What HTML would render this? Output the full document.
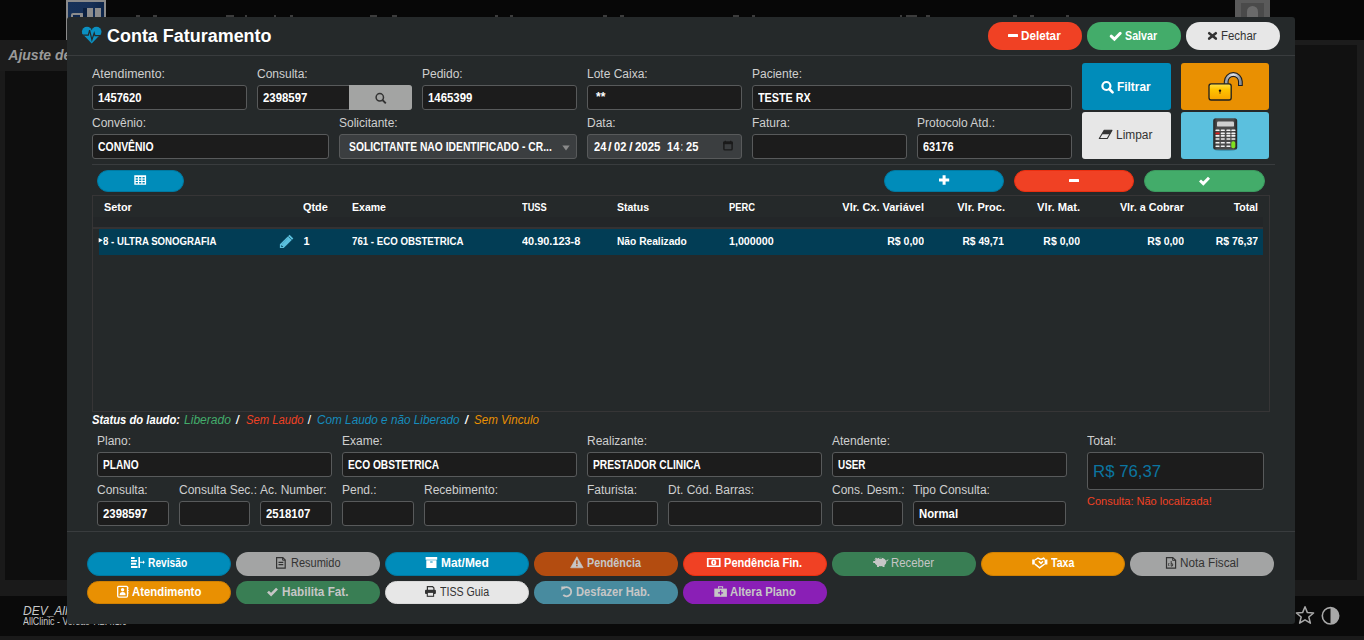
<!DOCTYPE html>
<html><head><meta charset="utf-8"><style>
*{margin:0;padding:0;box-sizing:border-box}
html,body{width:1364px;height:640px;overflow:hidden;background:#0e0e0e;font-family:"Liberation Sans",sans-serif}
.a{position:absolute}
.t{white-space:nowrap}
.inp{background:#1c1c1c;border:1px solid #585a5b;border-radius:3px}
</style></head><body>
<div class="a " style="left:0px;top:0px;width:1364px;height:40px;background:#070707"></div>
<div class="a " style="left:0px;top:40px;width:1364px;height:31px;background:#1c1c1c"></div>
<div class="a " style="left:0px;top:71px;width:5px;height:509px;background:#1a1a1a"></div>
<div class="a " style="left:5px;top:71px;width:62px;height:509px;background:#0e0e0e"></div>
<div class="a " style="left:1295px;top:45px;width:62px;height:535px;background:#111111"></div>
<div class="a " style="left:1357px;top:40px;width:7px;height:540px;background:#1c1c1c"></div>
<div class="a " style="left:0px;top:580px;width:1364px;height:16px;background:#1a1a1a"></div>
<div class="a " style="left:0px;top:596px;width:1364px;height:40px;background:#0a0a0a"></div>
<div class="a " style="left:0px;top:636px;width:1364px;height:4px;background:#1a1a1a"></div>
<div class="a " style="left:66px;top:0px;width:40px;height:40px;background:#8a8a8a"></div>
<div class="a " style="left:67.6px;top:1.5px;width:36.8px;height:38.5px;background:linear-gradient(90deg,#173259 0%,#163058 60%,#0c2448 100%)"></div>
<div class="a " style="left:70.5px;top:12.6px;width:14.3px;height:4.4px;background:#8c8c8c;border-radius:2px 3px 0 0"></div>
<div class="a " style="left:73px;top:15.4px;width:7px;height:1.6px;background:#10284e"></div>
<div class="a " style="left:83px;top:7.8px;width:4px;height:9.2px;background:#0b2040"></div>
<div class="a " style="left:87px;top:7.8px;width:6.2px;height:9.2px;background:#8c8c8c"></div>
<div class="a " style="left:95.1px;top:7.8px;width:6.1px;height:9.2px;background:#8c8c8c"></div>
<div class="a " style="left:136px;top:15px;width:4px;height:2px;background:#3c3c3c"></div>
<div class="a " style="left:153px;top:15px;width:4px;height:2px;background:#3c3c3c"></div>
<div class="a " style="left:226px;top:15px;width:8px;height:2px;background:#3c3c3c"></div>
<div class="a " style="left:245px;top:15px;width:2px;height:2px;background:#3c3c3c"></div>
<div class="a " style="left:274px;top:15px;width:2px;height:2px;background:#3c3c3c"></div>
<div class="a " style="left:290px;top:15px;width:3px;height:2px;background:#3c3c3c"></div>
<div class="a " style="left:370px;top:15px;width:7px;height:2px;background:#3c3c3c"></div>
<div class="a " style="left:392px;top:15px;width:5px;height:2px;background:#3c3c3c"></div>
<div class="a " style="left:495px;top:15px;width:3px;height:2px;background:#3c3c3c"></div>
<div class="a " style="left:510px;top:15px;width:3px;height:2px;background:#3c3c3c"></div>
<div class="a " style="left:603px;top:15px;width:4px;height:2px;background:#3c3c3c"></div>
<div class="a " style="left:620px;top:15px;width:4px;height:2px;background:#3c3c3c"></div>
<div class="a " style="left:733px;top:15px;width:6px;height:2px;background:#3c3c3c"></div>
<div class="a " style="left:752px;top:15px;width:3px;height:2px;background:#3c3c3c"></div>
<div class="a " style="left:900px;top:15px;width:2px;height:2px;background:#3c3c3c"></div>
<div class="a " style="left:906px;top:15px;width:11px;height:2px;background:#3c3c3c"></div>
<div class="a " style="left:926px;top:15px;width:4px;height:2px;background:#3c3c3c"></div>
<div class="a " style="left:1013px;top:15px;width:4px;height:2px;background:#3c3c3c"></div>
<div class="a " style="left:1030px;top:15px;width:4px;height:2px;background:#3c3c3c"></div>
<div class="a " style="left:1066px;top:15px;width:3px;height:2px;background:#3c3c3c"></div>
<div class="a " style="left:1235px;top:0px;width:35px;height:17px;background:#5a5a5a"></div>
<div class="a " style="left:1241px;top:3px;width:23px;height:14px;background:#4a4a4a"></div>
<div class="a " style="left:1247px;top:6px;width:11px;height:11px;background:#6a6a6a;border-radius:50% 50% 0 0"></div>
<div class="a t" style="top:48.15px;font-size:14px;line-height:14px;color:#9a9a9a;font-weight:bold;font-style:italic;left:8.30px;">Ajuste de Contas</div>
<div class="a t" style="top:604.84px;font-size:12px;line-height:12px;color:#c8c8c8;font-style:italic;left:23.00px;">DEV_AllClinic</div>
<div class="a t" style="top:617.04px;font-size:10px;line-height:10px;color:#c8c8c8;transform:scaleX(0.8866);transform-origin:left center;left:23.00px;">AllClinic - Versão 7.2.4.1.0</div>
<svg class="a" style="left:1295px;top:605px;" width="20" height="20" viewBox="1295 605 20 20"><polygon points="1305,606.8 1307.4,612.6 1313.6,613 1308.8,617 1310.4,623.2 1305,619.8 1299.6,623.2 1301.2,617 1296.4,613 1302.6,612.6" fill="none" stroke="#a8a8a8" stroke-width="1.5" stroke-linejoin="round"/></svg>
<svg class="a" style="left:1320px;top:605px;" width="21" height="21" viewBox="1320 605 21 21"><circle cx="1330.5" cy="615.8" r="8.2" fill="#0a0a0a" stroke="#a8a8a8" stroke-width="1.6"/><path d="M1330.5 607.6 A8.2 8.2 0 0 1 1330.5 624 Z" fill="#a8a8a8"/></svg>
<div class="a " style="left:67px;top:17px;width:1228px;height:607px;background:#25292a;border-radius:3px"></div>
<div class="a " style="left:67px;top:55px;width:1228px;height:1px;background:#393c3e"></div>
<div class="a " style="left:92px;top:164px;width:1183px;height:1px;background:#393c3e"></div>
<div class="a " style="left:67px;top:531px;width:1228px;height:1px;background:#393c3e"></div>
<svg class="a" style="left:80px;top:25px;" width="24" height="20" viewBox="80 25 24 20"><circle cx="86.95" cy="31.8" r="5.05" fill="#0b90c2"/><circle cx="96.45" cy="31.8" r="5.05" fill="#0b90c2"/><polygon points="82.3,33.8 91.7,43.5 101.1,33.8 96.5,30 91.7,30.6 86.9,30" fill="#0b90c2"/><polyline points="80,35.2 88.3,35.2 89.6,30.2 91.9,39.9 94.2,33 95,35.6 104,35.6" fill="none" stroke="#25292a" stroke-width="1.2" stroke-linejoin="miter"/></svg>
<div class="a t" style="top:26.56px;font-size:18px;line-height:18px;color:#fff;font-weight:bold;transform:scaleX(0.9970);transform-origin:left center;left:107.00px;">Conta Faturamento</div>
<div class="a " style="left:988px;top:22px;width:94px;height:28px;background:#f04124;border-radius:14px"></div>
<div class="a " style="left:1087px;top:22px;width:94px;height:28px;background:#43ac6a;border-radius:14px"></div>
<div class="a " style="left:1186px;top:22px;width:94px;height:28px;background:#e7e7e7;border-radius:14px"></div>
<div class="a " style="left:1008px;top:34px;width:10px;height:3px;background:#fff;border-radius:0.5px"></div>
<div class="a t" style="top:29.94px;font-size:12px;line-height:12px;color:#fff;font-weight:bold;transform:scaleX(0.9754);transform-origin:left center;left:1021.30px;">Deletar</div>
<svg class="a" style="left:1109px;top:31px;" width="14" height="11" viewBox="1109 31 14 11"><polyline points="1111.2,36.2 1114.4,39.2 1120.2,33.3" fill="none" stroke="#fff" stroke-width="3" stroke-linecap="round"/></svg>
<div class="a t" style="top:29.94px;font-size:12px;line-height:12px;color:#fff;font-weight:bold;transform:scaleX(0.8917);transform-origin:left center;left:1124.90px;">Salvar</div>
<svg class="a" style="left:1207px;top:31px;" width="11" height="10" viewBox="1207 31 11 10"><path d="M1209.2 33.2 L1215.8 38.6 M1215.8 33.2 L1209.2 38.6" stroke="#333" stroke-width="2.6" stroke-linecap="round"/></svg>
<div class="a t" style="top:29.94px;font-size:12px;line-height:12px;color:#333;transform:scaleX(0.9517);transform-origin:left center;left:1221.20px;">Fechar</div>
<div class="a t" style="top:67.74px;font-size:12px;line-height:12px;color:#cfcfcf;transform:scaleX(1.0325);transform-origin:left center;left:92.00px;">Atendimento:</div>
<div class="a inp" style="left:92px;top:85px;width:155px;height:25px;"></div>
<div class="a t" style="top:91.84px;font-size:12px;line-height:12px;color:#fff;font-weight:bold;transform:scaleX(0.9315);transform-origin:left center;left:98.30px;">1457620</div>
<div class="a t" style="top:67.74px;font-size:12px;line-height:12px;color:#cfcfcf;left:257.00px;">Consulta:</div>
<div class="a inp" style="left:257px;top:85px;width:155px;height:25px;"></div>
<div class="a t" style="top:91.84px;font-size:12px;line-height:12px;color:#fff;font-weight:bold;transform:scaleX(0.9486);transform-origin:left center;left:263.30px;">2398597</div>
<div class="a " style="left:349px;top:85px;width:63px;height:25px;background:#a3a4a3;border-radius:0 3px 3px 0"></div>
<svg class="a" style="left:374px;top:92px;" width="14" height="13" viewBox="374 92 14 13"><circle cx="379.8" cy="97.3" r="3.7" fill="none" stroke="#333" stroke-width="1.5"/><path d="M382.5 100 L385.8 103.3" stroke="#333" stroke-width="1.9"/></svg>
<div class="a t" style="top:67.74px;font-size:12px;line-height:12px;color:#cfcfcf;left:422.00px;">Pedido:</div>
<div class="a inp" style="left:422px;top:85px;width:155px;height:25px;"></div>
<div class="a t" style="top:91.84px;font-size:12px;line-height:12px;color:#fff;font-weight:bold;transform:scaleX(0.9486);transform-origin:left center;left:428.30px;">1465399</div>
<div class="a t" style="top:67.74px;font-size:12px;line-height:12px;color:#cfcfcf;left:587.00px;">Lote Caixa:</div>
<div class="a inp" style="left:587px;top:85px;width:155px;height:25px;"></div>
<div class="a t" style="top:91.34px;font-size:12px;line-height:12px;color:#fff;font-weight:bold;left:596.00px;">**</div>
<div class="a t" style="top:67.74px;font-size:12px;line-height:12px;color:#cfcfcf;left:752.00px;">Paciente:</div>
<div class="a inp" style="left:752px;top:85px;width:320px;height:25px;"></div>
<div class="a t" style="top:91.84px;font-size:12px;line-height:12px;color:#fff;font-weight:bold;transform:scaleX(0.9000);transform-origin:left center;left:758.30px;">TESTE RX</div>
<div class="a t" style="top:116.74px;font-size:12px;line-height:12px;color:#cfcfcf;left:92.00px;">Convênio:</div>
<div class="a inp" style="left:92px;top:134px;width:237px;height:25px;"></div>
<div class="a t" style="top:140.84px;font-size:12px;line-height:12px;color:#fff;font-weight:bold;transform:scaleX(0.8688);transform-origin:left center;left:98.30px;">CONVÊNIO</div>
<div class="a t" style="top:116.74px;font-size:12px;line-height:12px;color:#cfcfcf;left:339.00px;">Solicitante:</div>
<div class="a inp" style="left:339px;top:134px;width:238px;height:25px;background:#3b3e40;"></div>
<div class="a t" style="top:140.84px;font-size:12px;line-height:12px;color:#fff;font-weight:bold;transform:scaleX(0.8600);transform-origin:left center;left:348.50px;">SOLICITANTE NAO IDENTIFICADO - CR...</div>
<svg class="a" style="left:561px;top:144px;" width="10" height="8" viewBox="561 144 10 8"><polygon points="562.3,145.4 569.7,145.4 566,150.5" fill="#8a8a8a"/></svg>
<div class="a t" style="top:116.74px;font-size:12px;line-height:12px;color:#cfcfcf;left:587.00px;">Data:</div>
<div class="a inp" style="left:587px;top:134px;width:155px;height:25px;background:#3b3e40;"></div>
<div class="a t" style="top:140.84px;font-size:12px;line-height:12px;color:#fff;font-weight:bold;transform:scaleX(0.9179);transform-origin:left center;left:593.90px;">24</div>
<div class="a t" style="top:140.84px;font-size:12px;line-height:12px;color:#fff;font-weight:bold;transform:scaleX(1.0909);transform-origin:left center;left:607.90px;">/</div>
<div class="a t" style="top:140.84px;font-size:12px;line-height:12px;color:#fff;font-weight:bold;transform:scaleX(0.9248);transform-origin:left center;left:613.90px;">02</div>
<div class="a t" style="top:140.84px;font-size:12px;line-height:12px;color:#fff;font-weight:bold;transform:scaleX(1.0909);transform-origin:left center;left:628.70px;">/</div>
<div class="a t" style="top:140.84px;font-size:12px;line-height:12px;color:#fff;font-weight:bold;transform:scaleX(0.9513);transform-origin:left center;left:634.70px;">2025</div>
<div class="a t" style="top:140.84px;font-size:12px;line-height:12px;color:#fff;font-weight:bold;transform:scaleX(0.9179);transform-origin:left center;left:667.00px;">14</div>
<div class="a t" style="top:140.84px;font-size:12px;line-height:12px;color:#fff;font-weight:bold;transform:scaleX(0.4000);transform-origin:left center;left:681.00px;">:</div>
<div class="a t" style="top:140.84px;font-size:12px;line-height:12px;color:#fff;font-weight:bold;transform:scaleX(0.9248);transform-origin:left center;left:685.50px;">25</div>
<svg class="a" style="left:722px;top:140px;" width="12" height="12" viewBox="722 140 12 12"><rect x="723.9" y="142.3" width="8.2" height="7.6" rx="1" fill="none" stroke="#1a1a1a" stroke-width="1.4"/><rect x="723.2" y="141.6" width="9.6" height="2.6" fill="#1a1a1a"/><path d="M725.3 140.8 V142 M730.7 140.8 V142" stroke="#1a1a1a" stroke-width="1.2"/></svg>
<div class="a t" style="top:116.74px;font-size:12px;line-height:12px;color:#cfcfcf;left:752.00px;">Fatura:</div>
<div class="a inp" style="left:752px;top:134px;width:155px;height:25px;"></div>
<div class="a t" style="top:116.74px;font-size:12px;line-height:12px;color:#cfcfcf;left:917.00px;">Protocolo Atd.:</div>
<div class="a inp" style="left:917px;top:134px;width:155px;height:25px;"></div>
<div class="a t" style="top:140.84px;font-size:12px;line-height:12px;color:#fff;font-weight:bold;transform:scaleX(0.9132);transform-origin:left center;left:923.30px;">63176</div>
<div class="a " style="left:1082px;top:63px;width:89px;height:47px;background:#008cba;border-radius:3px"></div>
<div class="a " style="left:1082px;top:112px;width:89px;height:47px;background:#e7e7e7;border-radius:3px"></div>
<div class="a " style="left:1181px;top:63px;width:88px;height:47px;background:#e99002;border-radius:3px"></div>
<div class="a " style="left:1181px;top:112px;width:88px;height:47px;background:#5bc0de;border-radius:3px"></div>
<svg class="a" style="left:1099px;top:79px;" width="16" height="16" viewBox="1099 79 16 16"><circle cx="1106.4" cy="86" r="4" fill="none" stroke="#fff" stroke-width="2.2"/><path d="M1109.3 89 L1112.6 92.3" stroke="#fff" stroke-width="2.6" stroke-linecap="round"/></svg>
<div class="a t" style="top:80.84px;font-size:12px;line-height:12px;color:#fff;font-weight:bold;transform:scaleX(0.9882);transform-origin:left center;left:1116.90px;">Filtrar</div>
<svg class="a" style="left:1098px;top:129px;" width="16" height="11" viewBox="1098 129 16 11"><polygon points="1104.2,130.3 1112,130.3 1107.3,138.5 1099.3,138.5" fill="none" stroke="#333" stroke-width="1.1" stroke-linejoin="round"/><polygon points="1104.2,130.3 1112,130.3 1109.8,134.3 1101.8,134.3" fill="#333"/></svg>
<div class="a t" style="top:128.54px;font-size:12px;line-height:12px;color:#333;transform:scaleX(0.9946);transform-origin:left center;left:1116.40px;">Limpar</div>
<svg class="a" style="left:1206px;top:70px;" width="40" height="33" viewBox="1206 70 40 33"><defs><linearGradient id="ly" x1="0" y1="0" x2="0" y2="1"><stop offset="0" stop-color="#ffe24a"/><stop offset="0.35" stop-color="#ffc400"/><stop offset="1" stop-color="#f7a300"/></linearGradient><linearGradient id="lg" x1="0" y1="0" x2="1" y2="0"><stop offset="0" stop-color="#9aa0a8"/><stop offset="0.5" stop-color="#e8eaee"/><stop offset="1" stop-color="#8a9098"/></linearGradient></defs><path d="M1226.2 84 V81.6 A7.1 7.1 0 0 1 1240.4 81.6 V86" fill="none" stroke="#1e1e1e" stroke-width="4.8"/><path d="M1226.2 84 V81.6 A7.1 7.1 0 0 1 1240.4 81.6 V85.1" fill="none" stroke="url(#lg)" stroke-width="2.6"/><rect x="1209" y="83.8" width="22.2" height="16.2" rx="2.2" fill="url(#ly)" stroke="#1e1e1e" stroke-width="1.3"/><circle cx="1220" cy="90.8" r="1.2" fill="#111"/><rect x="1219.5" y="91" width="1" height="2.8" fill="#6a3a00"/></svg>
<svg class="a" style="left:1210px;top:116px;" width="30" height="37" viewBox="1210 116 30 37"><defs><linearGradient id="cg" x1="0" y1="0" x2="1" y2="0"><stop offset="0" stop-color="#222"/><stop offset="0.15" stop-color="#4a4a4a"/><stop offset="0.85" stop-color="#4a4a4a"/><stop offset="1" stop-color="#222"/></linearGradient></defs><ellipse cx="1225" cy="150.3" rx="10" ry="0.8" fill="#3a8fab" opacity="0.8"/><rect x="1213.2" y="118.2" width="24" height="31.6" rx="2.5" fill="url(#cg)"/><rect x="1217" y="121.6" width="17" height="5" rx="1.2" fill="#cfcfcf"/><rect x="1215.4" y="129.5" width="4.2" height="1.6" rx="0.7" fill="#f0f0f0"/><rect x="1220.7" y="129.5" width="4.2" height="1.6" rx="0.7" fill="#f0f0f0"/><rect x="1226.3000000000002" y="129.5" width="4.2" height="1.6" rx="0.7" fill="#f0f0f0"/><rect x="1231.3000000000002" y="129.5" width="4.2" height="1.6" rx="0.7" fill="#f0f0f0"/><rect x="1215.4" y="132.6" width="4.2" height="1.6" rx="0.7" fill="#e02020"/><rect x="1220.7" y="132.6" width="4.2" height="1.6" rx="0.7" fill="#f0f0f0"/><rect x="1226.3000000000002" y="132.6" width="4.2" height="1.6" rx="0.7" fill="#f0f0f0"/><rect x="1231.3000000000002" y="132.6" width="4.2" height="1.6" rx="0.7" fill="#f0f0f0"/><rect x="1215.4" y="135.1" width="4.2" height="1.6" rx="0.7" fill="#f0f0f0"/><rect x="1220.7" y="135.1" width="4.2" height="1.6" rx="0.7" fill="#f0f0f0"/><rect x="1226.3000000000002" y="135.1" width="4.2" height="1.6" rx="0.7" fill="#f0f0f0"/><rect x="1231.3000000000002" y="135.1" width="4.2" height="1.6" rx="0.7" fill="#f0f0f0"/><rect x="1215.4" y="138.2" width="4.2" height="1.6" rx="0.7" fill="#f0f0f0"/><rect x="1220.7" y="138.2" width="4.2" height="1.6" rx="0.7" fill="#f0f0f0"/><rect x="1226.3000000000002" y="138.2" width="4.2" height="1.6" rx="0.7" fill="#f0f0f0"/><rect x="1231.3000000000002" y="138.2" width="4.2" height="1.6" rx="0.7" fill="#f0f0f0"/><rect x="1215.4" y="142.0" width="4.2" height="1.6" rx="0.7" fill="#f0f0f0"/><rect x="1220.7" y="142.0" width="4.2" height="1.6" rx="0.7" fill="#f0f0f0"/><rect x="1226.3000000000002" y="142.0" width="4.2" height="1.6" rx="0.7" fill="#f0f0f0"/><rect x="1215.4" y="145.45" width="4.2" height="1.6" rx="0.7" fill="#f0f0f0"/><rect x="1220.7" y="145.45" width="4.2" height="1.6" rx="0.7" fill="#f0f0f0"/><rect x="1226.3000000000002" y="145.45" width="4.2" height="1.6" rx="0.7" fill="#f0f0f0"/><rect x="1231.3" y="141.2" width="4" height="7" rx="1.8" fill="#7fe020"/></svg>
<div class="a " style="left:97px;top:170px;width:87px;height:22px;background:#008cba;border-radius:11px;border:1px solid #0079a1"></div>
<div class="a " style="left:884px;top:170px;width:120px;height:22px;background:#008cba;border-radius:11px;border:1px solid #0079a1"></div>
<div class="a " style="left:1014px;top:170px;width:120px;height:22px;background:#f04124;border-radius:11px;border:1px solid #ea2f10"></div>
<div class="a " style="left:1144px;top:170px;width:121px;height:22px;background:#43ac6a;border-radius:11px;border:1px solid #3c9a5f"></div>
<svg class="a" style="left:133px;top:174px;" width="14" height="12" viewBox="133 174 14 12"><path fill="#fff" fill-rule="evenodd" d="M134.3 175.3 h11.8 v9.5 h-11.8 Z M135.7 176.9 h2.2 v1.7 h-2.2 Z M139.1 176.9 h2.2 v1.7 h-2.2 Z M142.5 176.9 h2.2 v1.7 h-2.2 Z M135.7 179.6 h2.2 v1.5 h-2.2 Z M139.1 179.6 h2.2 v1.5 h-2.2 Z M142.5 179.6 h2.2 v1.5 h-2.2 Z M135.7 182.1 h2.2 v1.5 h-2.2 Z M139.1 182.1 h2.2 v1.5 h-2.2 Z M142.5 182.1 h2.2 v1.5 h-2.2 Z"/></svg>
<svg class="a" style="left:938px;top:174px;" width="12" height="12" viewBox="938 174 12 12"><path d="M939 178.5 h10.2 v3 h-10.2 Z M942.6 175.2 h3 v9.6 h-3 Z" fill="#fff"/></svg>
<div class="a " style="left:1069px;top:179px;width:10px;height:3px;background:#fff;border-radius:0.5px"></div>
<svg class="a" style="left:1198px;top:176px;" width="13" height="10" viewBox="1198 176 13 10"><polyline points="1200,180.5 1203.3,183.6 1209,177.8" fill="none" stroke="#fff" stroke-width="2.9"/></svg>
<div class="a " style="left:92px;top:195px;width:1178px;height:217px;border:1px solid #363536"></div>
<div class="a " style="left:93px;top:217px;width:1170px;height:11px;background:#232628"></div>
<div class="a " style="left:93px;top:227px;width:1170px;height:2px;background:#343233"></div>
<div class="a " style="left:99px;top:229px;width:1164px;height:26px;background:#023d55"></div>
<div class="a t" style="top:201.59px;font-size:11px;line-height:11px;color:#fff;font-weight:bold;transform:scaleX(0.9893);transform-origin:left center;left:103.50px;">Setor</div>
<div class="a t" style="top:201.59px;font-size:11px;line-height:11px;color:#fff;font-weight:bold;transform:scaleX(0.9920);transform-origin:left center;left:302.90px;">Qtde</div>
<div class="a t" style="top:201.59px;font-size:11px;line-height:11px;color:#fff;font-weight:bold;transform:scaleX(0.9577);transform-origin:left center;left:351.60px;">Exame</div>
<div class="a t" style="top:201.59px;font-size:11px;line-height:11px;color:#fff;font-weight:bold;transform:scaleX(0.8430);transform-origin:left center;left:522.30px;">TUSS</div>
<div class="a t" style="top:201.59px;font-size:11px;line-height:11px;color:#fff;font-weight:bold;transform:scaleX(0.9524);transform-origin:left center;left:617.20px;">Status</div>
<div class="a t" style="top:201.59px;font-size:11px;line-height:11px;color:#fff;font-weight:bold;transform:scaleX(0.8529);transform-origin:left center;left:728.60px;">PERC</div>
<div class="a t" style="top:201.59px;font-size:11px;line-height:11px;color:#fff;font-weight:bold;transform:scaleX(0.9963);transform-origin:right center;left:324.05px;width:600px;text-align:right;">Vlr. Cx. Variável</div>
<div class="a t" style="top:201.59px;font-size:11px;line-height:11px;color:#fff;font-weight:bold;left:404.99px;width:600px;text-align:right;">Vlr. Proc.</div>
<div class="a t" style="top:201.59px;font-size:11px;line-height:11px;color:#fff;font-weight:bold;transform:scaleX(1.0166);transform-origin:right center;left:479.68px;width:600px;text-align:right;">Vlr. Mat.</div>
<div class="a t" style="top:201.59px;font-size:11px;line-height:11px;color:#fff;font-weight:bold;transform:scaleX(0.9801);transform-origin:right center;left:584.22px;width:600px;text-align:right;">Vlr. a Cobrar</div>
<div class="a t" style="top:201.59px;font-size:11px;line-height:11px;color:#fff;font-weight:bold;transform:scaleX(0.9569);transform-origin:right center;left:657.56px;width:600px;text-align:right;">Total</div>
<svg class="a" style="left:98px;top:237px;" width="6" height="7" viewBox="98 237 6 7"><polygon points="98.7,238 102.9,240.3 98.7,242.6" fill="#fff"/></svg>
<div class="a t" style="top:235.59px;font-size:11px;line-height:11px;color:#fff;font-weight:bold;transform:scaleX(0.8758);transform-origin:left center;left:103.30px;">8 - ULTRA SONOGRAFIA</div>
<svg class="a" style="left:278px;top:233px;" width="18" height="17" viewBox="278 233 18 17"><polygon points="279.9,248 279.9,244.3 289.6,234.8 293.3,238.4 283.7,248" fill="#5bc0de"/><path d="M288.3 236.4 L291.7 239.8" stroke="#023d55" stroke-width="0.7"/><path d="M282 244.2 L288 238.3" stroke="#3a9ab8" stroke-width="0.5"/><polygon points="281.3,244.9 283.3,246.9 281.3,246.9" fill="#023d55"/></svg>
<div class="a t" style="top:235.59px;font-size:11px;line-height:11px;color:#fff;font-weight:bold;left:303.50px;">1</div>
<div class="a t" style="top:235.59px;font-size:11px;line-height:11px;color:#fff;font-weight:bold;transform:scaleX(0.8806);transform-origin:left center;left:351.90px;">761 - ECO OBSTETRICA</div>
<div class="a t" style="top:235.59px;font-size:11px;line-height:11px;color:#fff;font-weight:bold;transform:scaleX(0.9932);transform-origin:left center;left:521.90px;">40.90.123-8</div>
<div class="a t" style="top:235.59px;font-size:11px;line-height:11px;color:#fff;font-weight:bold;transform:scaleX(0.9282);transform-origin:left center;left:617.20px;">Não Realizado</div>
<div class="a t" style="top:235.59px;font-size:11px;line-height:11px;color:#fff;font-weight:bold;transform:scaleX(0.9717);transform-origin:left center;left:728.60px;">1,000000</div>
<div class="a t" style="top:235.59px;font-size:11px;line-height:11px;color:#fff;font-weight:bold;transform:scaleX(0.9558);transform-origin:right center;left:324.02px;width:600px;text-align:right;">R$ 0,00</div>
<div class="a t" style="top:235.59px;font-size:11px;line-height:11px;color:#fff;font-weight:bold;transform:scaleX(0.9305);transform-origin:right center;left:404.44px;width:600px;text-align:right;">R$ 49,71</div>
<div class="a t" style="top:235.59px;font-size:11px;line-height:11px;color:#fff;font-weight:bold;transform:scaleX(0.9506);transform-origin:right center;left:479.72px;width:600px;text-align:right;">R$ 0,00</div>
<div class="a t" style="top:235.59px;font-size:11px;line-height:11px;color:#fff;font-weight:bold;transform:scaleX(0.9506);transform-origin:right center;left:584.22px;width:600px;text-align:right;">R$ 0,00</div>
<div class="a t" style="top:235.59px;font-size:11px;line-height:11px;color:#fff;font-weight:bold;transform:scaleX(0.9462);transform-origin:right center;left:658.04px;width:600px;text-align:right;">R$ 76,37</div>
<div class="a t" style="top:414.04px;font-size:12px;line-height:12px;color:#fff;font-weight:bold;font-style:italic;transform:scaleX(0.9362);transform-origin:left center;left:92.40px;">Status do laudo:</div>
<div class="a t" style="top:414.04px;font-size:12px;line-height:12px;color:#43ac6a;font-style:italic;transform:scaleX(1.0064);transform-origin:left center;left:184.40px;">Liberado</div>
<div class="a t" style="top:414.04px;font-size:12px;line-height:12px;color:#fff;font-weight:bold;font-style:italic;transform:scaleX(0.8571);transform-origin:left center;left:235.93px;">/</div>
<div class="a t" style="top:414.04px;font-size:12px;line-height:12px;color:#f04124;font-style:italic;transform:scaleX(0.9365);transform-origin:left center;left:245.50px;">Sem Laudo</div>
<div class="a t" style="top:414.04px;font-size:12px;line-height:12px;color:#fff;font-weight:bold;font-style:italic;transform:scaleX(0.7143);transform-origin:left center;left:308.36px;">/</div>
<div class="a t" style="top:414.04px;font-size:12px;line-height:12px;color:#168cbc;font-style:italic;transform:scaleX(0.9801);transform-origin:left center;left:317.20px;">Com Laudo e não Liberado</div>
<div class="a t" style="top:414.04px;font-size:12px;line-height:12px;color:#fff;font-weight:bold;font-style:italic;transform:scaleX(0.8980);transform-origin:left center;left:464.75px;">/</div>
<div class="a t" style="top:414.04px;font-size:12px;line-height:12px;color:#e99002;font-style:italic;transform:scaleX(0.9672);transform-origin:left center;left:473.80px;">Sem Vinculo</div>
<div class="a t" style="top:434.74px;font-size:12px;line-height:12px;color:#cfcfcf;left:97.00px;">Plano:</div>
<div class="a inp" style="left:97px;top:452px;width:235px;height:25px;"></div>
<div class="a t" style="top:458.84px;font-size:12px;line-height:12px;color:#fff;font-weight:bold;transform:scaleX(0.8476);transform-origin:left center;left:103.30px;">PLANO</div>
<div class="a t" style="top:434.74px;font-size:12px;line-height:12px;color:#cfcfcf;left:342.00px;">Exame:</div>
<div class="a inp" style="left:342px;top:452px;width:235px;height:25px;"></div>
<div class="a t" style="top:458.84px;font-size:12px;line-height:12px;color:#fff;font-weight:bold;transform:scaleX(0.8490);transform-origin:left center;left:348.30px;">ECO OBSTETRICA</div>
<div class="a t" style="top:434.74px;font-size:12px;line-height:12px;color:#cfcfcf;left:587.00px;">Realizante:</div>
<div class="a inp" style="left:587px;top:452px;width:235px;height:25px;"></div>
<div class="a t" style="top:458.84px;font-size:12px;line-height:12px;color:#fff;font-weight:bold;transform:scaleX(0.8521);transform-origin:left center;left:593.30px;">PRESTADOR CLINICA</div>
<div class="a t" style="top:434.74px;font-size:12px;line-height:12px;color:#cfcfcf;left:832.00px;">Atendente:</div>
<div class="a inp" style="left:832px;top:452px;width:235px;height:25px;"></div>
<div class="a t" style="top:458.84px;font-size:12px;line-height:12px;color:#fff;font-weight:bold;transform:scaleX(0.8228);transform-origin:left center;left:838.30px;">USER</div>
<div class="a t" style="top:434.84px;font-size:12px;line-height:12px;color:#cfcfcf;transform:scaleX(1.0300);transform-origin:left center;left:1087.00px;">Total:</div>
<div class="a inp" style="left:1087px;top:452px;width:177px;height:38px;"></div>
<div class="a t" style="top:463.21px;font-size:17px;line-height:17px;color:#0b75a0;transform:scaleX(0.9884);transform-origin:left center;left:1093.40px;">R$ 76,37</div>
<div class="a t" style="top:495.69px;font-size:11px;line-height:11px;color:#f04124;left:1087.00px;">Consulta: Não localizada!</div>
<div class="a t" style="top:483.74px;font-size:12px;line-height:12px;color:#cfcfcf;left:97.00px;">Consulta:</div>
<div class="a inp" style="left:97px;top:501px;width:72px;height:25px;"></div>
<div class="a t" style="top:507.84px;font-size:12px;line-height:12px;color:#fff;font-weight:bold;transform:scaleX(0.9486);transform-origin:left center;left:103.30px;">2398597</div>
<div class="a t" style="top:483.74px;font-size:12px;line-height:12px;color:#cfcfcf;left:179.00px;">Consulta Sec.:</div>
<div class="a inp" style="left:179px;top:501px;width:71px;height:25px;"></div>
<div class="a t" style="top:483.74px;font-size:12px;line-height:12px;color:#cfcfcf;left:260.00px;">Ac. Number:</div>
<div class="a inp" style="left:260px;top:501px;width:72px;height:25px;"></div>
<div class="a t" style="top:507.84px;font-size:12px;line-height:12px;color:#fff;font-weight:bold;transform:scaleX(0.9486);transform-origin:left center;left:266.30px;">2518107</div>
<div class="a t" style="top:483.74px;font-size:12px;line-height:12px;color:#cfcfcf;left:342.00px;">Pend.:</div>
<div class="a inp" style="left:342px;top:501px;width:72px;height:25px;"></div>
<div class="a t" style="top:483.74px;font-size:12px;line-height:12px;color:#cfcfcf;left:424.00px;">Recebimento:</div>
<div class="a inp" style="left:424px;top:501px;width:153px;height:25px;"></div>
<div class="a t" style="top:483.74px;font-size:12px;line-height:12px;color:#cfcfcf;left:587.00px;">Faturista:</div>
<div class="a inp" style="left:587px;top:501px;width:71px;height:25px;"></div>
<div class="a t" style="top:483.74px;font-size:12px;line-height:12px;color:#cfcfcf;left:668.00px;">Dt. Cód. Barras:</div>
<div class="a inp" style="left:668px;top:501px;width:154px;height:25px;"></div>
<div class="a t" style="top:483.74px;font-size:12px;line-height:12px;color:#cfcfcf;left:832.00px;">Cons. Desm.:</div>
<div class="a inp" style="left:832px;top:501px;width:71px;height:25px;"></div>
<div class="a t" style="top:483.74px;font-size:12px;line-height:12px;color:#cfcfcf;left:913.00px;">Tipo Consulta:</div>
<div class="a inp" style="left:913px;top:501px;width:153px;height:25px;"></div>
<div class="a t" style="top:507.84px;font-size:12px;line-height:12px;color:#fff;font-weight:bold;transform:scaleX(0.9443);transform-origin:left center;left:919.30px;">Normal</div>
<div class="a " style="left:87px;top:552px;width:144px;height:24px;background:#008cba;border-radius:12.0px;border:1px solid #0079a1;"></div>
<div class="a " style="left:236px;top:552px;width:144px;height:24px;background:#a3a4a4;border-radius:12.0px;"></div>
<div class="a " style="left:385px;top:552px;width:144px;height:24px;background:#008cba;border-radius:12.0px;border:1px solid #0079a1;"></div>
<div class="a " style="left:534px;top:552px;width:144px;height:24px;background:#b34c10;border-radius:12.0px;"></div>
<div class="a " style="left:683px;top:552px;width:144px;height:24px;background:#f04124;border-radius:12.0px;border:1px solid #ea2f10;"></div>
<div class="a " style="left:832px;top:552px;width:144px;height:24px;background:#397e54;border-radius:12.0px;"></div>
<div class="a " style="left:981px;top:552px;width:144px;height:24px;background:#e99002;border-radius:12.0px;border:1px solid #d08002;"></div>
<div class="a " style="left:1130px;top:552px;width:144px;height:24px;background:#a3a4a4;border-radius:12.0px;"></div>
<div class="a " style="left:87px;top:581px;width:144px;height:23px;background:#e99002;border-radius:11.5px;border:1px solid #d08002;"></div>
<div class="a " style="left:236px;top:581px;width:144px;height:23px;background:#397e54;border-radius:11.5px;"></div>
<div class="a " style="left:385px;top:581px;width:144px;height:23px;background:#e7e7e7;border-radius:11.5px;border:1px solid #dadada;"></div>
<div class="a " style="left:534px;top:581px;width:144px;height:23px;background:#488b9f;border-radius:11.5px;"></div>
<div class="a " style="left:683px;top:581px;width:144px;height:23px;background:#8a1fb6;border-radius:11.5px;"></div>
<svg class="a" style="left:130px;top:556px;" width="16" height="13" viewBox="130 556 16 13"><path fill="#fff" d="M131 557 h3.6 v1.9 h-3.6 Z M131 559.9 h6 v1.9 h-6 Z M131 562.8 h5.2 v1.9 h-5.2 Z M131 565.9 h6.6 v2 h-6.6 Z M138.4 557 h1.6 v10.9 h-1.6 Z M140 561.8 h3.4 v1 h-3.4 Z"/><polygon points="143,560.6 144.8,562.3 143,564" fill="#fff"/></svg>
<div class="a t" style="top:556.94px;font-size:12px;line-height:12px;color:#fff;font-weight:bold;transform:scaleX(0.8522);transform-origin:left center;left:147.60px;">Revisão</div>
<svg class="a" style="left:275px;top:556px;" width="12" height="14" viewBox="275 556 12 14"><path d="M276.6 557.6 h6.2 l2.4 2.4 v8.2 h-8.6 Z" fill="none" stroke="#333" stroke-width="1.2"/><path d="M282.6 557.6 v2.6 h2.6" fill="none" stroke="#333" stroke-width="1"/><path d="M278.5 562.4 h4.8 M278.5 564.6 h4.8" stroke="#333" stroke-width="1.1"/></svg>
<div class="a t" style="top:556.94px;font-size:12px;line-height:12px;color:#333;transform:scaleX(0.9167);transform-origin:left center;left:290.60px;">Resumido</div>
<svg class="a" style="left:425px;top:556px;" width="13" height="13" viewBox="425 556 13 13"><path fill="#fff" d="M425.6 557.1 h11.6 v2.6 h-11.6 Z M426.3 560.3 h10.2 v7.6 h-10.2 Z"/><rect x="430" y="561.6" width="2.8" height="0.9" rx="0.4" fill="#008cba"/></svg>
<div class="a t" style="top:556.94px;font-size:12px;line-height:12px;color:#fff;font-weight:bold;transform:scaleX(0.9958);transform-origin:left center;left:441.00px;">Mat/Med</div>
<svg class="a" style="left:570px;top:556px;" width="14" height="13" viewBox="570 556 14 13"><polygon points="576.9,556.7 583.2,567.8 570.6,567.8" fill="#c6c6c6" stroke="#c6c6c6" stroke-width="0.6" stroke-linejoin="round"/><path d="M576.9 560.3 v4" stroke="#b34c10" stroke-width="1.4"/><rect x="576.2" y="565" width="1.4" height="1.3" fill="#b34c10"/></svg>
<div class="a t" style="top:556.94px;font-size:12px;line-height:12px;color:#c6c6c6;font-weight:bold;transform:scaleX(0.8985);transform-origin:left center;left:587.00px;">Pendência</div>
<svg class="a" style="left:706px;top:557px;" width="16" height="11" viewBox="706 557 16 11"><path fill="#fff" fill-rule="evenodd" d="M706.9 558 h13.7 v8.9 h-13.7 Z M708.6 559.5 h10.3 v5.9 h-10.3 Z"/><ellipse cx="713.75" cy="562.45" rx="2.6" ry="2.9" fill="#fff"/><path d="M713.75 561 v3" stroke="#f04124" stroke-width="1"/></svg>
<div class="a t" style="top:556.94px;font-size:12px;line-height:12px;color:#fff;font-weight:bold;transform:scaleX(0.9233);transform-origin:left center;left:723.80px;">Pendência Fin.</div>
<svg class="a" style="left:872px;top:556px;" width="18" height="13" viewBox="872 556 18 13"><ellipse cx="880.5" cy="562" rx="5.8" ry="4.3" fill="#c6c6c6"/><rect x="877" y="564" width="2" height="3" fill="#c6c6c6"/><rect x="882.5" y="564" width="2" height="3" fill="#c6c6c6"/><polygon points="874.2,560 876,557.4 877.4,559" fill="#c6c6c6"/><rect x="873.2" y="561" width="2.2" height="2" fill="#c6c6c6"/><path d="M886 561 q2 0 2-1.6" fill="none" stroke="#c6c6c6" stroke-width="0.9"/><path d="M879 558.4 h3" stroke="#397e54" stroke-width="0.8"/></svg>
<div class="a t" style="top:556.94px;font-size:12px;line-height:12px;color:#c6c6c6;transform:scaleX(0.9493);transform-origin:left center;left:891.10px;">Receber</div>
<svg class="a" style="left:1031px;top:557px;" width="18" height="12" viewBox="1031 557 18 12"><path d="M1032.2 559.6 h2.6 v5 h-2.6 Z M1044.6 559.6 h2.8 v5 h-2.8 Z" fill="#fff"/><path d="M1035 560 l3-2 l3 1.4 l2.6-1.2 l1.2 1.4 M1035 564.2 l4.6 3.6 l5-3.8" fill="none" stroke="#fff" stroke-width="1.5"/><path d="M1038.8 561.2 l2.2 2.2 l2-2.2" fill="none" stroke="#fff" stroke-width="1.5"/></svg>
<div class="a t" style="top:556.94px;font-size:12px;line-height:12px;color:#fff;font-weight:bold;transform:scaleX(0.8835);transform-origin:left center;left:1051.00px;">Taxa</div>
<svg class="a" style="left:1165px;top:556px;" width="12" height="14" viewBox="1165 556 12 14"><path d="M1166.5 557.6 h6.2 l2.9 2.6 v8 h-9.1 Z" fill="none" stroke="#333" stroke-width="1.2"/><path d="M1172.6 557.6 v2.8 h2.9" fill="none" stroke="#333" stroke-width="0.9"/><path d="M1169 563 q-1 1.6 0 3 M1171.2 561 v5.2 M1171.2 563.4 q1.8 0 1.6 1.6 q-0.2 1.4 -1.6 1.2" fill="none" stroke="#333" stroke-width="0.9"/></svg>
<div class="a t" style="top:556.94px;font-size:12px;line-height:12px;color:#333;transform:scaleX(0.9767);transform-origin:left center;left:1180.20px;">Nota Fiscal</div>
<svg class="a" style="left:116px;top:585px;" width="14" height="14" viewBox="116 585 14 14"><rect x="117.7" y="586.3" width="9.8" height="10.8" rx="1" fill="none" stroke="#fff" stroke-width="1.3"/><path d="M127.6 588 h1 M127.6 590.5 h1 M127.6 593 h1" stroke="#fff" stroke-width="1"/><circle cx="122.6" cy="589.7" r="1.7" fill="#fff"/><path d="M119.6 595.2 q0-3.2 3-3.2 q3 0 3 3.2 Z" fill="#fff"/></svg>
<div class="a t" style="top:586.14px;font-size:12px;line-height:12px;color:#fff;font-weight:bold;transform:scaleX(0.9454);transform-origin:left center;left:131.60px;">Atendimento</div>
<svg class="a" style="left:266px;top:587px;" width="14" height="11" viewBox="266 587 14 11"><polyline points="268,591.6 271.1,594.6 277,588.6" fill="none" stroke="#c6c6c6" stroke-width="2.7"/></svg>
<div class="a t" style="top:586.14px;font-size:12px;line-height:12px;color:#c6c6c6;font-weight:bold;transform:scaleX(0.9779);transform-origin:left center;left:282.30px;">Habilita Fat.</div>
<svg class="a" style="left:424px;top:585px;" width="13" height="13" viewBox="424 585 13 13"><path d="M427.4 590 v-3.3 h5.2 l1.3 1.3 v2" fill="none" stroke="#333" stroke-width="1.2"/><rect x="425" y="589.8" width="10.9" height="4.2" rx="1" fill="#333"/><rect x="427.3" y="592.3" width="6.3" height="4" fill="#e7e7e7" stroke="#333" stroke-width="1.1"/></svg>
<div class="a t" style="top:586.14px;font-size:12px;line-height:12px;color:#333;transform:scaleX(0.8863);transform-origin:left center;left:440.00px;">TISS Guia</div>
<svg class="a" style="left:560px;top:585px;" width="14" height="13" viewBox="560 585 14 13"><path d="M563.2 588.6 A4.6 4.6 0 1 1 563.3 594.9" fill="none" stroke="#c6c6c6" stroke-width="1.8"/><polygon points="561.3,586.6 565.6,586.6 561.3,590.8" fill="#c6c6c6"/></svg>
<div class="a t" style="top:586.14px;font-size:12px;line-height:12px;color:#c6c6c6;font-weight:bold;transform:scaleX(0.9307);transform-origin:left center;left:575.80px;">Desfazer Hab.</div>
<svg class="a" style="left:713px;top:585px;" width="15" height="13" viewBox="713 585 15 13"><path d="M714.3 588.6 h12.6 v8.2 h-12.6 Z" fill="#c6c6c6"/><path d="M718.6 588.6 v-1.9 h4 v1.9" fill="none" stroke="#c6c6c6" stroke-width="1.1"/><path d="M720.6 590.3 v5 M718.1 592.8 h5" stroke="#8a1fb6" stroke-width="1.3"/></svg>
<div class="a t" style="top:586.14px;font-size:12px;line-height:12px;color:#c6c6c6;font-weight:bold;transform:scaleX(0.9414);transform-origin:left center;left:730.00px;">Altera Plano</div>
</body></html>
